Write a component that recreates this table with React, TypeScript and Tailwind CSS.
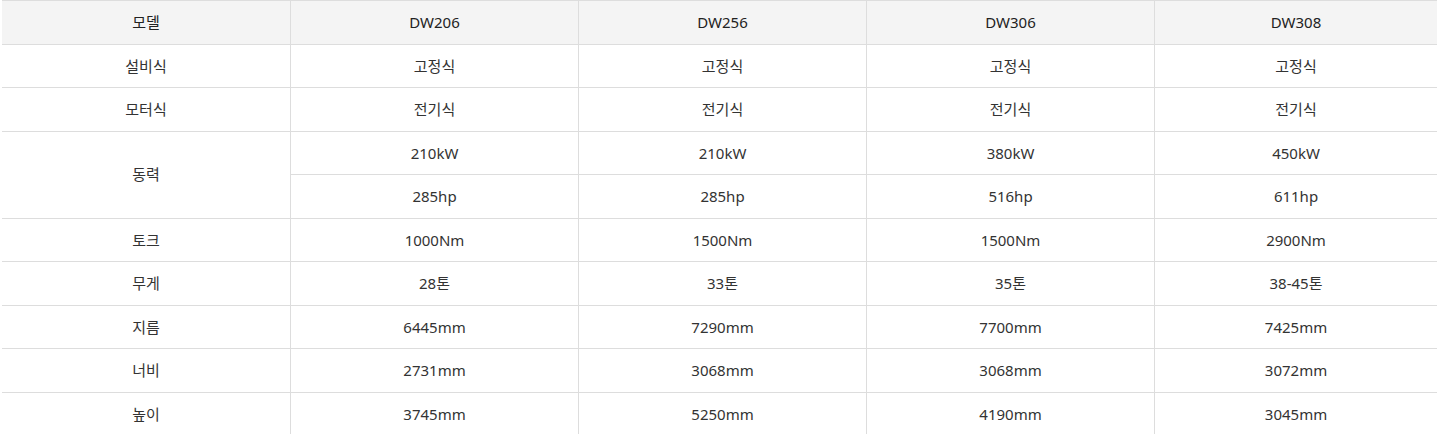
const models = ["DW206", "DW256", "DW306", "DW308"]

const rows: { label: string; values: string[] }[] = [
  { label: "설비식", values: ["고정식", "고정식", "고정식", "고정식"] },
  { label: "모터식", values: ["전기식", "전기식", "전기식", "전기식"] },
]

const rowsAfter: { label: string; values: string[] }[] = [
  { label: "토크", values: ["1000Nm", "1500Nm", "1500Nm", "2900Nm"] },
  { label: "무게", values: ["28톤", "33톤", "35톤", "38-45톤"] },
  { label: "지름", values: ["6445mm", "7290mm", "7700mm", "7425mm"] },
  { label: "너비", values: ["2731mm", "3068mm", "3068mm", "3072mm"] },
  { label: "높이", values: ["3745mm", "5250mm", "4190mm", "3045mm"] },
]

const power = {
  kw: ["210kW", "210kW", "380kW", "450kW"],
  hp: ["285hp", "285hp", "516hp", "611hp"],
}

const cell = "flex items-center justify-center border-t border-[#dddddd] h-[43.5px]"
const sep = "border-r"

const App = () => {
  return (
    <div
      className="w-full bg-white pl-[2px] text-[15px] text-[#333333]"
      style={{ fontFamily: '"Noto Sans", "Noto Sans CJK KR", sans-serif' }}
    >
      <div className="grid grid-cols-[289px_288px_288px_288px_1fr]">
        <div className={`${cell} ${sep} bg-[#f4f4f4] text-[#222222]`}>모델</div>
        {models.map((m, i) => (
          <div key={m} className={`${cell} ${i < 3 ? sep : ""} bg-[#f4f4f4] text-[#222222]`}>
            {m}
          </div>
        ))}

        {rows.map((r) => (
          <div key={r.label} className="contents">
            <div className={`${cell} ${sep}`}>{r.label}</div>
            {r.values.map((v, i) => (
              <div key={i} className={`${cell} ${i < 3 ? sep : ""}`}>
                {v}
              </div>
            ))}
          </div>
        ))}

        <div className="row-span-2 flex items-center justify-center border-t border-r border-[#dddddd]">
          동력
        </div>
        {power.kw.map((v, i) => (
          <div key={"kw" + i} className={`${cell} ${i < 3 ? sep : ""}`}>
            {v}
          </div>
        ))}
        {power.hp.map((v, i) => (
          <div key={"hp" + i} className={`${cell} ${i < 3 ? sep : ""}`}>
            {v}
          </div>
        ))}

        {rowsAfter.map((r) => (
          <div key={r.label} className="contents">
            <div className={`${cell} ${sep}`}>{r.label}</div>
            {r.values.map((v, i) => (
              <div key={i} className={`${cell} ${i < 3 ? sep : ""}`}>
                {v}
              </div>
            ))}
          </div>
        ))}
      </div>
    </div>
  )
}

export default App
